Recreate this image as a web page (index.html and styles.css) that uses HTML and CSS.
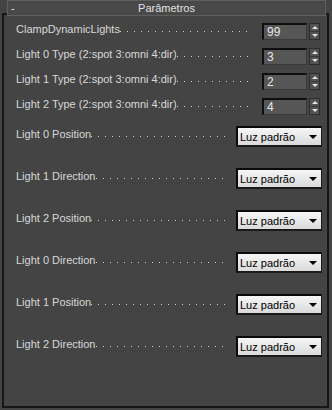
FILE: index.html
```html
<!DOCTYPE html>
<html lang="pt">
<head>
  <meta charset="UTF-8" />
  <meta name="viewport" content="width=device-width, initial-scale=1.0" />
  <title>Parâmetros</title>
  <link rel="stylesheet" href="styles.css">
</head>
<body>

<div class="rollout">
  <div class="rollout-title">
    <span class="toggle">-</span>
    <span class="title">Parâmetros</span>
    <span></span>
  </div>

  <div class="params">
    <div class="row">
      <div class="caption"><span class="label">ClampDynamicLights</span><span class="leader"></span></div>
      <div class="spin-box">99</div>
      <div class="spin-arrows"><span class="up"></span><span class="down"></span></div>
    </div>
    <div class="row">
      <div class="caption"><span class="label">Light 0 Type (2:spot 3:omni 4:dir)</span><span class="leader"></span></div>
      <div class="spin-box">3</div>
      <div class="spin-arrows"><span class="up"></span><span class="down"></span></div>
    </div>
    <div class="row">
      <div class="caption"><span class="label">Light 1 Type (2:spot 3:omni 4:dir)</span><span class="leader"></span></div>
      <div class="spin-box">2</div>
      <div class="spin-arrows"><span class="up"></span><span class="down"></span></div>
    </div>
    <div class="row">
      <div class="caption"><span class="label">Light 2 Type (2:spot 3:omni 4:dir)</span><span class="leader"></span></div>
      <div class="spin-box">4</div>
      <div class="spin-arrows"><span class="up"></span><span class="down"></span></div>
    </div>
  </div>

  <div class="params drops">
    <div class="row">
      <div class="caption"><span class="label">Light 0 Position</span><span class="leader"></span></div>
      <div class="dropdown"><span>Luz padrão</span><span class="caret"></span></div>
    </div>
    <div class="row">
      <div class="caption"><span class="label">Light 1 Direction</span><span class="leader"></span></div>
      <div class="dropdown"><span>Luz padrão</span><span class="caret"></span></div>
    </div>
    <div class="row">
      <div class="caption"><span class="label">Light 2 Position</span><span class="leader"></span></div>
      <div class="dropdown"><span>Luz padrão</span><span class="caret"></span></div>
    </div>
    <div class="row">
      <div class="caption"><span class="label">Light 0 Direction</span><span class="leader"></span></div>
      <div class="dropdown"><span>Luz padrão</span><span class="caret"></span></div>
    </div>
    <div class="row">
      <div class="caption"><span class="label">Light 1 Position</span><span class="leader"></span></div>
      <div class="dropdown"><span>Luz padrão</span><span class="caret"></span></div>
    </div>
    <div class="row">
      <div class="caption"><span class="label">Light 2 Direction</span><span class="leader"></span></div>
      <div class="dropdown"><span>Luz padrão</span><span class="caret"></span></div>
    </div>
  </div>
</div>

</body>
</html>
```

FILE: styles.css
```css
* {
  box-sizing: border-box;
  margin: 0;
  padding: 0;
}

body {
  background-color: #444444;
  color: #d8d8d8;
  font-family: "Liberation Sans", Arial, sans-serif;
  font-size: 11px;
  height: 410px;
  overflow: hidden;
}

.rollout {
  margin: 13px 3px 0 2px;
  height: 395px;
  border: 2px solid #161616;
}

.rollout-title {
  display: grid;
  grid-template-columns: 14px 1fr 14px;
  align-items: center;
  height: 16px;
  margin: -15px 1px 0 3px;
  border: 1px solid #5e5e5e;
  background-color: #484848;
  color: #e2e2e2;
  line-height: 14px;
}

.rollout-title .toggle {
  padding-left: 3px;
}

.rollout-title .title {
  text-align: center;
}

.params {
  display: flex;
  flex-direction: column;
  gap: 8px;
  margin-top: 7px;
  padding: 0 7px 0 12px;
}

.row {
  display: flex;
  align-items: center;
  height: 17px;
}

.caption {
  flex: 1;
  display: flex;
  line-height: 13px;
  margin: 0 13px 5px 0;
}

.label {
  white-space: nowrap;
}

.leader {
  flex: 1;
  margin-bottom: 4px;
  background: linear-gradient(to right, #cfcfcf 1px, transparent 1px) left bottom / 7px 1px repeat-x;
}

.spin-box {
  width: 45px;
  height: 17px;
  padding: 1px 0 0 3px;
  background-color: #565656;
  border-top: 2px solid #0e0e0e;
  border-left: 2px solid #0e0e0e;
  border-right: 1px solid #3a3a3a;
  border-bottom: 1px solid #3a3a3a;
  color: #e6e6e6;
  font-size: 12px;
  line-height: 13px;
}

.spin-arrows {
  display: flex;
  flex-direction: column;
  width: 11px;
  height: 17px;
  margin-left: 2px;
  border: 1px solid #2c2c2c;
  background-color: #525252;
}

.spin-arrows span {
  flex: 1;
  display: flex;
  align-items: center;
  justify-content: center;
}

.spin-arrows .up {
  border-bottom: 1px solid #3a3a3a;
}

.spin-arrows .up::after {
  content: "";
  border-left: 3px solid transparent;
  border-right: 3px solid transparent;
  border-bottom: 3px solid #e4e4e4;
}

.spin-arrows .down::after {
  content: "";
  border-left: 3px solid transparent;
  border-right: 3px solid transparent;
  border-top: 3px solid #e4e4e4;
}

.drops {
  gap: 21px;
  margin-top: 11px;
}

.drops .row {
  height: 21px;
}

.drops .caption {
  margin-right: 8px;
}

.dropdown {
  display: flex;
  align-items: center;
  justify-content: space-between;
  width: 86px;
  height: 21px;
  margin-right: -2px;
  padding: 0 4px 0 2px;
  border-top: 2px solid #0a0a0a;
  border-left: 2px solid #0a0a0a;
  border-right: 1px solid #1a1a1a;
  border-bottom: 2px solid #1a1a1a;
  background: linear-gradient(#f6f6f6, #dadada);
  color: #000;
  font-size: 11px;
}

.caret {
  border-left: 4px solid transparent;
  border-right: 4px solid transparent;
  border-top: 4px solid #000;
}
```
